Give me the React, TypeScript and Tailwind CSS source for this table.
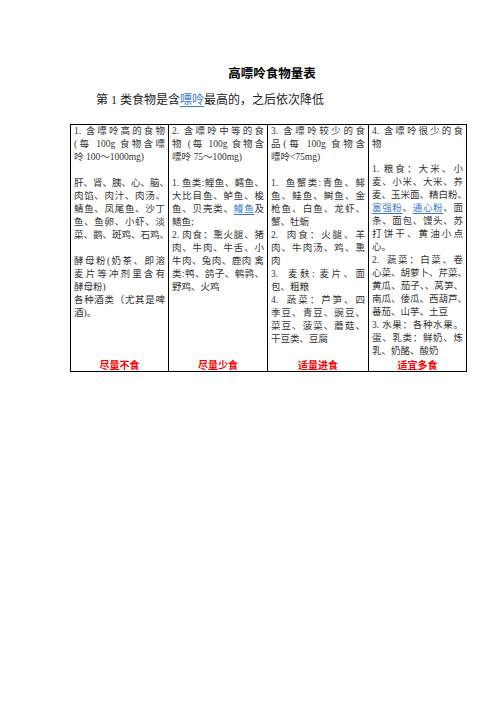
const serif = "font-['Liberation_Serif','Noto_Sans_CJK_SC',serif]";

type Para = string[] | null;

const columns: { paras: Para[]; label: string; width: string }[] = [
  {
    width: "w-[98px]",
    label: "尽量不食",
    paras: [
      ["1. 含嘌呤高的食物", "(每 100g 食物含嘌", "呤 100～1000mg)"],
      null,
      ["肝、肾、胰、心、脑、", "肉馅、肉汁、肉汤、", "鲭鱼、凤尾鱼、沙丁", "鱼、鱼卵、小虾、淡", "菜、鹅、斑鸡、石鸡、"],
      null,
      ["酵母粉(奶茶、即溶", "麦片等冲剂里含有", "酵母粉)"],
      ["各种酒类（尤其是啤", "酒)。"],
    ],
  },
  {
    width: "w-[99px]",
    label: "尽量少食",
    paras: [
      ["2. 含嘌呤中等的食", "物 (每 100g 食物含", "嘌呤 75～100mg)"],
      null,
      ["1. 鱼类:鲤鱼、鳕鱼、", "大比目鱼、鲈鱼、梭", "鱼、贝壳类、{鳗鱼}及", "鳝鱼;"],
      ["2. 肉食：熏火腿、猪", "肉、牛肉、牛舌、小", "牛肉、兔肉、鹿肉 禽", "类:鸭、鸽子、鹌鹑、", "野鸡、火鸡"],
    ],
  },
  {
    width: "w-[101px]",
    label: "适量进食",
    paras: [
      ["3. 含嘌呤较少的食", "品(每 100g 食物含", "嘌呤<75mg)"],
      null,
      ["1.  鱼蟹类:青鱼、鲱", "鱼、鲑鱼、鲥鱼、金", "枪鱼、白鱼、龙虾、", "蟹、牡蛎"],
      ["2.  肉食：火腿、羊", "肉、牛肉汤、鸡、熏", "肉"],
      ["3.  麦麸: 麦片、面", "包、粗粮"],
      ["4.  蔬菜：芦笋、四", "季豆、青豆、豌豆、", "菜豆、菠菜、蘑菇、", "干豆类、豆腐"],
    ],
  },
  {
    width: "w-[99px]",
    label: "适宜多食",
    paras: [
      ["4. 含嘌呤很少的食", "物"],
      null,
      ["1. 粮食：大米、小", "麦、小米、大米、荞", "麦、玉米面、精白粉、", "{富强粉}、{通心粉}、面", "条、面包、馒头、苏", "打饼干、黄油小点", "心。"],
      ["2.  蔬菜：白菜、卷", "心菜、胡萝卜、芹菜、", "黄瓜、茄子、、莴笋、", "南瓜、倭瓜、西葫芦、", "蕃茄、山芋、土豆"],
      ["3. 水果：各种水果。", "蛋、乳类：鲜奶、炼", "乳、奶酪、酸奶"],
    ],
  },
];

function LineText({ text }: { text: string }) {
  const parts = text.split(/(\{[^}]+\})/);
  return (
    <>
      {parts.map((p, i) =>
        p.startsWith("{") ? (
          <span key={i} className="text-[#3a78d4] underline decoration-[#3a78d4] underline-offset-2">
            {p.slice(1, -1)}
          </span>
        ) : (
          <span key={i}>{p}</span>
        ),
      )}
    </>
  );
}

export default function App() {
  return (
    <div lang="zh-CN" className={`w-[496px] h-[702px] bg-white text-[#333] ${serif}`}>
      {/* Heading */}
      <div className="pt-[65px] pl-[96px] w-[448px]">
        <h1 className="text-center text-[12.5px] leading-[16px] font-bold text-black font-['Noto_Sans_CJK_SC',sans-serif]">
          高嘌呤食物量表
        </h1>
        <p className="mt-[11px] text-[12px] leading-[16px] text-[#222]">
          第 1 类食物是含
          <span className="text-[#3a78d4] underline decoration-[#3a78d4] underline-offset-2">嘌呤</span>
          最高的，之后依次降低
        </p>
      </div>

      {/* Table */}
      <div className="mt-[16px] ml-[70px] flex h-[248px] w-fit border-y border-black">
        {columns.map((col, ci) => (
          <div
            key={ci}
            className={`${col.width} flex flex-col border-l border-black px-[3px] text-[9.5px] leading-[13px] ${
              ci === columns.length - 1 ? "border-r" : ""
            }`}
          >
            {col.paras.map((para, pi) =>
              para === null ? (
                <div key={pi} className="h-[13px]" />
              ) : (
                <div key={pi}>
                  {para.map((line, li) => (
                    <div
                      key={li}
                      className={`h-[13px] whitespace-pre ${
                        li < para.length - 1 ? "text-justify [text-align-last:justify]" : ""
                      }`}
                    >
                      <LineText text={line} />
                    </div>
                  ))}
                </div>
              ),
            )}
            <div className="mt-auto text-center text-[10px] leading-[13px] font-bold text-[#ff0000] font-['Noto_Sans_CJK_SC',sans-serif]">
              {col.label}
            </div>
          </div>
        ))}
      </div>
    </div>
  );
}
